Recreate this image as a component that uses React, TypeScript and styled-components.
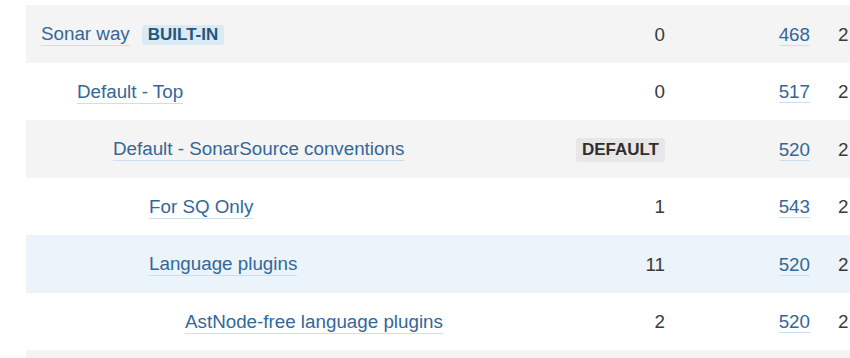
import styled, { createGlobalStyle } from "styled-components";

const GlobalStyle = createGlobalStyle`
  html, body {
    margin: 0;
    padding: 0;
    background: #ffffff;
    overflow: hidden;
  }
  body {
    font-family: "Liberation Sans", Arial, Helvetica, sans-serif;
    color: #333333;
  }
`;

const Page = styled.div`
  box-sizing: border-box;
  width: 850px;
  height: 358px;
  padding: 5px 0 0 26px;
  overflow: hidden;
`;

const Table = styled.div`
  display: flex;
  flex-direction: column;
  width: 824px;
`;

const Row = styled.div<{ $tone: "gray" | "white" | "blue" }>`
  display: grid;
  grid-template-columns: 539px 100px 145px 1fr;
  align-items: center;
  height: 57.5px;
  box-sizing: border-box;
  padding-top: 2px;
  font-size: 18.8px;
  background: ${({ $tone }) =>
    $tone === "gray" ? "#f4f4f4" : $tone === "blue" ? "#ebf3fb" : "#ffffff"};
`;

const NameCell = styled.div<{ $level: number }>`
  display: flex;
  align-items: center;
  gap: 12px;
  padding-left: ${({ $level }) => 15 + $level * 36}px;
`;

const Link = styled.a`
  color: #33679a;
  text-decoration: none;
  border-bottom: 1px solid #cddfee;
  cursor: pointer;
`;

const NumCell = styled.div`
  text-align: right;
  color: #3a3a3a;
`;

const DateCell = styled.div`
  padding-left: 28px;
  white-space: nowrap;
  color: #3a3a3a;
`;

const Badge = styled.span<{ $kind: "builtin" | "default" }>`
  display: inline-flex;
  align-items: center;
  height: ${({ $kind }) => ($kind === "builtin" ? 20 : 24)}px;
  padding: 0 6px;
  border-radius: 3px;
  font-size: 17px;
  font-weight: 700;
  background: ${({ $kind }) => ($kind === "builtin" ? "#d8eaf6" : "#e7e7e7")};
  color: ${({ $kind }) => ($kind === "builtin" ? "#24557c" : "#2f2f2f")};
`;

type Profile = {
  name: string;
  level: number;
  builtIn?: boolean;
  isDefault?: boolean;
  projects: number;
  rules: number;
  tone: "gray" | "white" | "blue";
};

const profiles: Profile[] = [
  { name: "Sonar way", level: 0, builtIn: true, projects: 0, rules: 468, tone: "gray" },
  { name: "Default - Top", level: 1, projects: 0, rules: 517, tone: "white" },
  { name: "Default - SonarSource conventions", level: 2, isDefault: true, projects: 0, rules: 520, tone: "gray" },
  { name: "For SQ Only", level: 3, projects: 1, rules: 543, tone: "white" },
  { name: "Language plugins", level: 3, projects: 11, rules: 520, tone: "blue" },
  { name: "AstNode-free language plugins", level: 4, projects: 2, rules: 520, tone: "white" },
];

export default function App() {
  return (
    <Page>
      <GlobalStyle />
      <Table>
        {profiles.map((p, i) => (
          <Row key={i} $tone={p.tone}>
            <NameCell $level={p.level}>
              <Link>{p.name}</Link>
              {p.builtIn && <Badge $kind="builtin">BUILT-IN</Badge>}
            </NameCell>
            <NumCell>
              {p.isDefault ? <Badge $kind="default">DEFAULT</Badge> : p.projects}
            </NumCell>
            <NumCell>
              <Link>{p.rules}</Link>
            </NumCell>
            <DateCell>2</DateCell>
          </Row>
        ))}
        <Row $tone="gray" />
      </Table>
    </Page>
  );
}
